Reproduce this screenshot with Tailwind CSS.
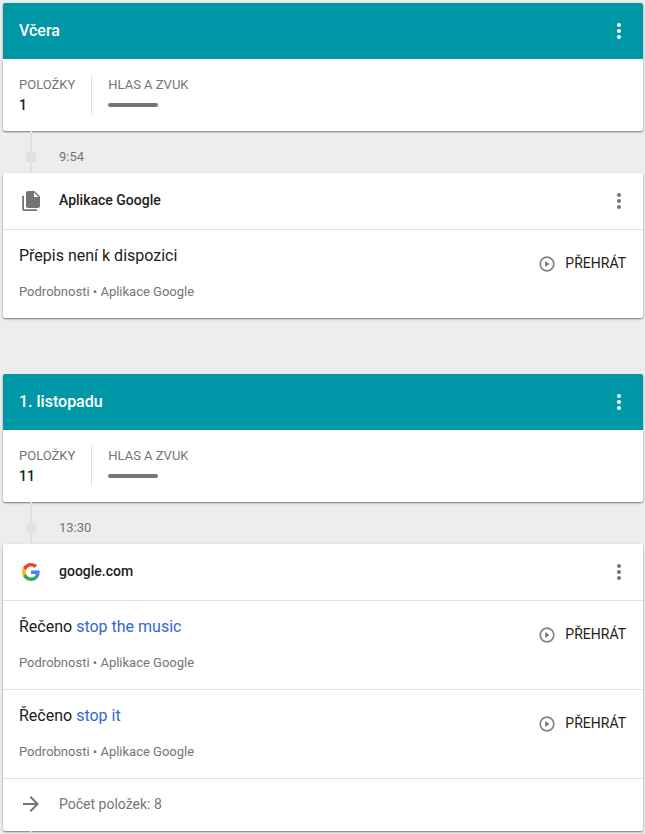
<!DOCTYPE html>
<html lang="cs">
<head>
    <meta charset="UTF-8">
    <meta name="viewport" content="width=device-width, initial-scale=1.0">
    <title>Moje aktivita</title>
    <script src="https://cdn.jsdelivr.net/npm/@tailwindcss/browser@4"></script>
</head>
<body class="bg-[#ededed] font-[Roboto,sans-serif] text-[#212121]">
    <!-- Shared icons -->
    <svg class="hidden">
        <symbol id="more" viewBox="0 0 24 24"><path d="M12 8c1.1 0 2-.9 2-2s-.9-2-2-2-2 .9-2 2 .9 2 2 2zm0 2c-1.1 0-2 .9-2 2s.9 2 2 2 2-.9 2-2-.9-2-2-2zm0 6c-1.1 0-2 .9-2 2s.9 2 2 2 2-.9 2-2-.9-2-2-2z"/></symbol>
        <symbol id="play" viewBox="0 0 16 16"><circle cx="8" cy="8" r="6.8" fill="none" stroke="currentColor" stroke-width="1.7"/><path d="M6.2 5v6l4.200-3z"/></symbol>
    </svg>

    <main class="pt-[3px] pr-[2px] pl-[3px]">
        <!-- Day: yesterday -->
        <section class="mb-14">
            <div class="overflow-hidden rounded-xs bg-white shadow-[0_1px_2px_rgba(0,0,0,0.5)]">
                <header class="flex h-14 items-center justify-between bg-[#0097a7] px-4 text-white">
                    <h2 class="text-base font-medium">Včera</h2>
                    <button type="button" aria-label="Další možnosti" class="-mr-1"><svg class="size-6 fill-current"><use href="#more"/></svg></button>
                </header>
                <dl class="flex p-4">
                    <div class="h-10 border-r border-[#e0e0e0] pr-4">
                        <dt class="text-[13px] leading-5 text-[#757575]">POLOŽKY</dt>
                        <dd class="text-sm leading-5 font-medium">1</dd>
                    </div>
                    <div class="pl-4">
                        <dt class="text-[13px] leading-5 text-[#757575]">HLAS A ZVUK</dt>
                        <dd class="mt-2 h-1 w-[50px] rounded-full bg-[#757575]"></dd>
                    </div>
                </dl>
            </div>

            <div class="flex h-[42px] pl-[23px]">
                <div class="flex w-[10px] flex-col items-center">
                    <span class="h-[21px] w-[2px] bg-[#e0e0e0]"></span>
                    <span class="size-[10px] rounded-xs bg-[#e0e0e0]"></span>
                    <span class="w-[2px] flex-1 bg-[#e0e0e0]"></span>
                </div>
                <time class="pt-4 pl-[23px] text-[13px] leading-5 text-[#757575]">9:54</time>
            </div>

            <article class="rounded-xs bg-white shadow-[0_1px_2px_rgba(0,0,0,0.5)]">
                <header class="flex h-14 items-center px-4">
                    <svg class="size-6 fill-[#757575]" viewBox="0 0 24 24"><path d="M3.200 6.800H5V20.200H18V22H5C4 22 3.200 21.200 3.200 20.200zM15.500 2H9C7.900 2 7 2.900 7 4v13c0 1.100.9 2 2 2h10c1.100 0 2-.9 2-2V7.500zM15 8V3.500L19.500 8z"/></svg>
                    <h3 class="ml-4 flex-1 pb-[2px] text-sm font-medium">Aplikace Google</h3>
                    <button type="button" aria-label="Další možnosti" class="-mr-1"><svg class="size-6 fill-[#757575]"><use href="#more"/></svg></button>
                </header>
                <div class="flex h-[89px] justify-between border-t border-[#e0e0e0] px-4 pt-[14px]">
                    <div>
                        <p class="text-base">Přepis není k dispozici</p>
                        <p class="mt-[14px] text-[13px] leading-5 text-[#757575]"><a href="#">Podrobnosti</a> • Aplikace Google</p>
                    </div>
                    <button type="button" class="mt-[7px] flex h-6 items-center gap-[10px] pr-px text-sm"><svg class="mt-[2px] size-4 fill-[#757575] text-[#858585]"><use href="#play"/></svg>PŘEHRÁT</button>
                </div>
            </article>
        </section>

        <!-- Day: 1 November -->
        <section>
            <div class="overflow-hidden rounded-xs bg-white shadow-[0_1px_2px_rgba(0,0,0,0.5)]">
                <header class="flex h-14 items-center justify-between bg-[#0097a7] px-4 text-white">
                    <h2 class="text-base font-medium">1. listopadu</h2>
                    <button type="button" aria-label="Další možnosti" class="-mr-1"><svg class="size-6 fill-current"><use href="#more"/></svg></button>
                </header>
                <dl class="flex p-4">
                    <div class="h-10 border-r border-[#e0e0e0] pr-4">
                        <dt class="text-[13px] leading-5 text-[#757575]">POLOŽKY</dt>
                        <dd class="text-sm leading-5 font-medium">11</dd>
                    </div>
                    <div class="pl-4">
                        <dt class="text-[13px] leading-5 text-[#757575]">HLAS A ZVUK</dt>
                        <dd class="mt-2 h-1 w-[50px] rounded-full bg-[#757575]"></dd>
                    </div>
                </dl>
            </div>

            <div class="flex h-[42px] pl-[23px]">
                <div class="flex w-[10px] flex-col items-center">
                    <span class="h-[21px] w-[2px] bg-[#e0e0e0]"></span>
                    <span class="size-[10px] rounded-xs bg-[#e0e0e0]"></span>
                    <span class="w-[2px] flex-1 bg-[#e0e0e0]"></span>
                </div>
                <time class="pt-4 pl-[23px] text-[13px] leading-5 text-[#757575]">13:30</time>
            </div>

            <article class="rounded-xs bg-white shadow-[0_1px_2px_rgba(0,0,0,0.5)]">
                <header class="flex h-14 items-center px-4">
                    <svg class="size-6 p-[3px]" viewBox="0 0 48 48">
                        <path fill="#ea4335" d="M24 9.500c3.540 0 6.710 1.220 9.210 3.600l6.850-6.850C35.900 2.380 30.470 0 24 0 14.620 0 6.510 5.380 2.560 13.220l7.980 6.190C12.430 13.720 17.740 9.500 24 9.500z"/>
                        <path fill="#4285f4" d="M46.980 24.550c0-1.570-.15-3.090-.38-4.550H24v9.020h12.940c-.58 2.960-2.260 5.480-4.780 7.180l7.730 6c4.510-4.180 7.090-10.360 7.090-17.650z"/>
                        <path fill="#fbbc05" d="M10.530 28.590c-.48-1.450-.76-2.990-.76-4.590s.27-3.140.76-4.590l-7.980-6.190C.92 16.460 0 20.120 0 24c0 3.880.92 7.540 2.560 10.780l7.970-6.190z"/>
                        <path fill="#34a853" d="M24 48c6.480 0 11.930-2.130 15.890-5.810l-7.730-6c-2.150 1.450-4.920 2.300-8.160 2.300-6.260 0-11.570-4.220-13.470-9.910l-7.980 6.190C6.510 42.620 14.620 48 24 48z"/>
                    </svg>
                    <h3 class="ml-4 flex-1 pb-[2px] text-sm font-medium">google.com</h3>
                    <button type="button" aria-label="Další možnosti" class="-mr-1"><svg class="size-6 fill-[#757575]"><use href="#more"/></svg></button>
                </header>
                <div class="flex h-[89px] justify-between border-t border-[#e0e0e0] px-4 pt-[14px]">
                    <div>
                        <p class="text-base">Řečeno <a href="#" class="text-[#3367d6]">stop the music</a></p>
                        <p class="mt-[14px] text-[13px] leading-5 text-[#757575]"><a href="#">Podrobnosti</a> • Aplikace Google</p>
                    </div>
                    <button type="button" class="mt-[7px] flex h-6 items-center gap-[10px] pr-px text-sm"><svg class="mt-[2px] size-4 fill-[#757575] text-[#858585]"><use href="#play"/></svg>PŘEHRÁT</button>
                </div>
                <div class="flex h-[89px] justify-between border-t border-[#e0e0e0] px-4 pt-[14px]">
                    <div>
                        <p class="text-base">Řečeno <a href="#" class="text-[#3367d6]">stop it</a></p>
                        <p class="mt-[14px] text-[13px] leading-5 text-[#757575]"><a href="#">Podrobnosti</a> • Aplikace Google</p>
                    </div>
                    <button type="button" class="mt-[7px] flex h-6 items-center gap-[10px] pr-px text-sm"><svg class="mt-[2px] size-4 fill-[#757575] text-[#858585]"><use href="#play"/></svg>PŘEHRÁT</button>
                </div>
                <a href="#" class="flex h-[53px] items-center border-t border-[#e0e0e0] px-4 pb-[2px] text-sm text-[#757575]">
                    <svg class="mr-4 size-6 fill-current" viewBox="0 0 24 24"><path d="M12 4l-1.410 1.410L16.170 11H4v2h12.170l-5.580 5.590L12 20l8-8z"/></svg>
                    Počet položek: 8
                </a>
            </article>
            <div class="ml-[27px] h-[3px] w-[2px] bg-[#e0e0e0]"></div>
        </section>
    </main>
</body>
</html>
